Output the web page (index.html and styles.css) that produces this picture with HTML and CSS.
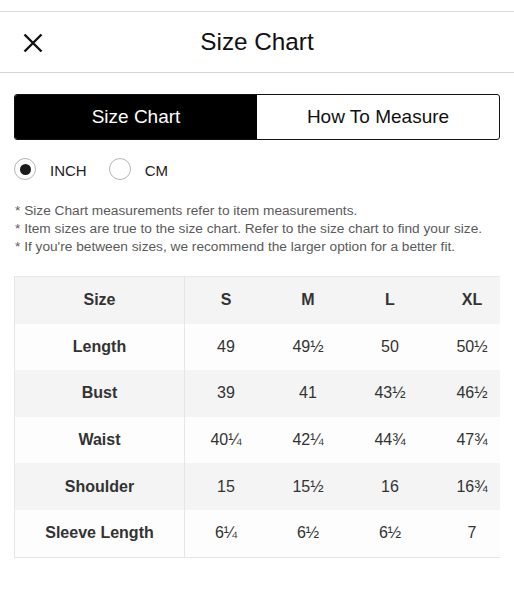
FILE: index.html
```html
<!DOCTYPE html>
<html lang="en">
<head>
    <meta charset="UTF-8">
    <meta name="viewport" content="width=device-width, initial-scale=1.0">
    <title>Size Chart</title>
    <link rel="stylesheet" href="styles.css">
</head>
<body>
    <div class="header">
        <button class="close-btn" aria-label="Close">
            <svg width="20" height="20" viewBox="0 0 20 20">
                <path d="M1.5 1.5 L18.5 18.5 M18.5 1.5 L1.5 18.5" stroke="#111" stroke-width="2.4" fill="none"/>
            </svg>
        </button>
        <h1>Size Chart</h1>
    </div>

    <div class="tabs">
        <div class="tab active">Size Chart</div>
        <div class="tab">How To Measure</div>
    </div>

    <div class="units">
        <label class="unit">
            <span class="radio checked"></span>
            <span>INCH</span>
        </label>
        <label class="unit">
            <span class="radio"></span>
            <span>CM</span>
        </label>
    </div>

    <div class="notes">
        <p>* Size Chart measurements refer to item measurements.</p>
        <p>* Item sizes are true to the size chart. Refer to the size chart to find your size.</p>
        <p>* If you're between sizes, we recommend the larger option for a better fit.</p>
    </div>

    <div class="table-wrap">
        <table class="size-table">
            <tr class="grey">
                <th>Size</th><th>S</th><th>M</th><th>L</th><th>XL</th>
            </tr>
            <tr>
                <th>Length</th><td>49</td><td>49½</td><td>50</td><td>50½</td>
            </tr>
            <tr class="grey">
                <th>Bust</th><td>39</td><td>41</td><td>43½</td><td>46½</td>
            </tr>
            <tr>
                <th>Waist</th><td>40¼</td><td>42¼</td><td>44¾</td><td>47¾</td>
            </tr>
            <tr class="grey">
                <th>Shoulder</th><td>15</td><td>15½</td><td>16</td><td>16¾</td>
            </tr>
            <tr>
                <th>Sleeve Length</th><td>6¼</td><td>6½</td><td>6½</td><td>7</td>
            </tr>
        </table>
    </div>
</body>
</html>
```

FILE: styles.css
```css
body {
    margin: 0;
    font-family: 'Liberation Sans', Arial, sans-serif;
    background-color: #fff;
    color: #111;
}

.header {
    margin-top: 11px;
    height: 60px;
    border-top: 1px solid #dcdcdc;
    border-bottom: 1px solid #d4d4d4;
    display: flex;
    align-items: center;
    justify-content: center;
    position: relative;
}

.close-btn {
    position: absolute;
    left: 23px;
    top: 21px;
    padding: 0;
    border: none;
    background: none;
    width: 20px;
    height: 20px;
}

.close-btn svg {
    display: block;
}

h1 {
    margin: 0;
    font-size: 24.3px;
    font-weight: normal;
    color: #111;
}

.tabs {
    display: flex;
    margin: 21px 14px 0;
    height: 44px;
    border: 1px solid #111;
    border-radius: 3px;
    overflow: hidden;
}

.tab {
    flex: 1;
    display: flex;
    align-items: center;
    justify-content: center;
    font-size: 19px;
    color: #111;
}

.tab.active {
    background-color: #000;
    color: #fff;
}

.units {
    display: flex;
    align-items: center;
    margin: 18px 14px 0;
    height: 22px;
}

.unit {
    display: flex;
    align-items: center;
    font-size: 15px;
    color: #222;
    margin-right: 22px;
}

.unit span:last-child {
    padding-top: 3px;
}

.radio {
    width: 20px;
    height: 20px;
    border: 1px solid #b5b5b5;
    border-radius: 50%;
    margin-right: 14px;
    display: flex;
    align-items: center;
    justify-content: center;
    box-sizing: content-box;
}

.radio.checked::after {
    content: "";
    width: 11px;
    height: 11px;
    border-radius: 50%;
    background-color: #1a1a1a;
}

.notes {
    margin: 22px 14px 0 15px;
    font-size: 13.7px;
    line-height: 18px;
    color: #5a5a5a;
}

.notes p {
    margin: 0;
}

.table-wrap {
    margin: 20px 14px 0;
    overflow: hidden;
    border-left: 1px solid #e6e6e6;
}

.size-table {
    border-collapse: collapse;
    table-layout: fixed;
    width: 498px;
    font-size: 16px;
    color: #333;
}

.size-table th,
.size-table td {
    height: 46.6px;
    padding: 0;
    text-align: center;
    width: 82px;
}

.size-table th:first-child {
    width: 169px;
    border-right: 1px solid #e6e6e6;
}

.size-table th {
    font-weight: bold;
}

.size-table td {
    font-weight: normal;
}

.size-table tr:first-child {
    border-top: 1px solid #e9e9e9;
}

.size-table tr:last-child {
    border-bottom: 1px solid #e6e6e6;
}

.size-table tr {
    background-color: #fdfdfd;
}

.size-table tr.grey {
    background-color: #f4f4f4;
}
```
